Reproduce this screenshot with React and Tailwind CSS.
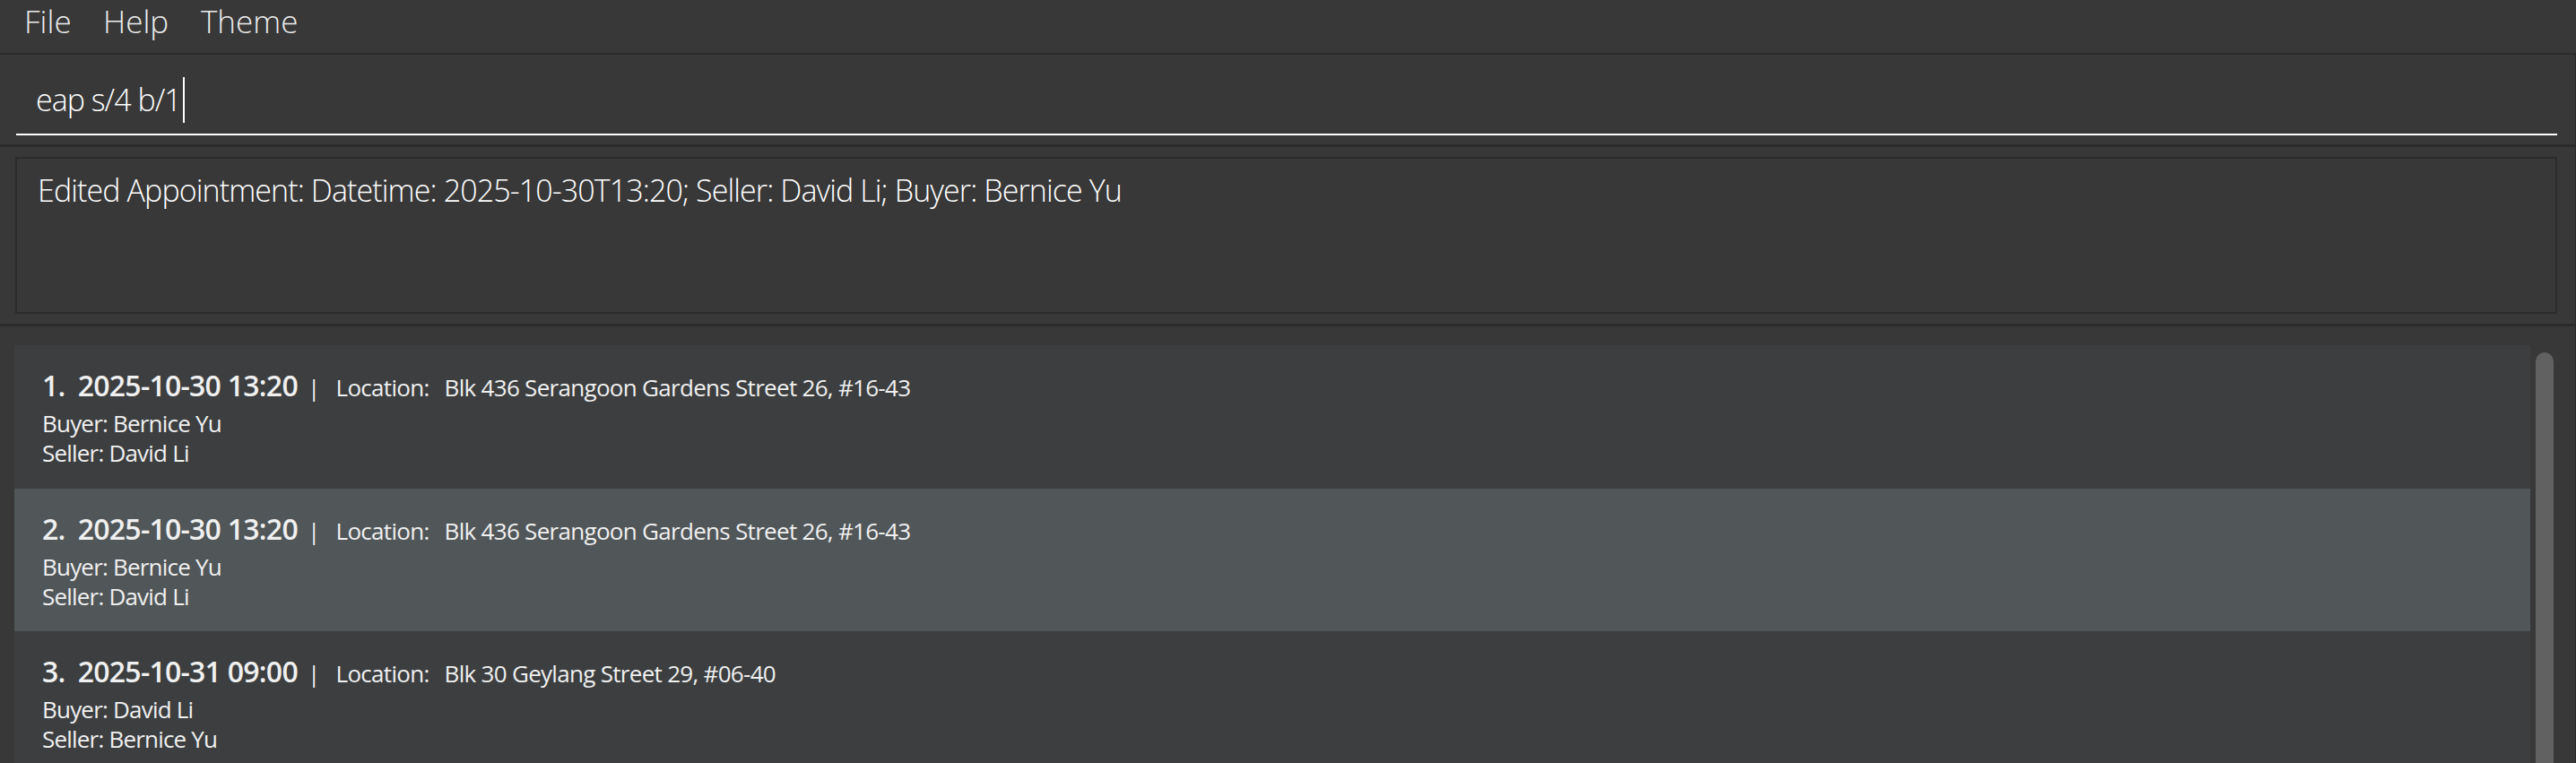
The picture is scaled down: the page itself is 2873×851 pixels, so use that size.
export default function App() {
  const appts = [
    { n: 1, dt: '2025-10-30 13:20', loc: 'Blk 436 Serangoon Gardens Street 26, #16-43', buyer: 'Bernice Yu', seller: 'David Li' },
    { n: 2, dt: '2025-10-30 13:20', loc: 'Blk 436 Serangoon Gardens Street 26, #16-43', buyer: 'Bernice Yu', seller: 'David Li' },
    { n: 3, dt: '2025-10-31 09:00', loc: 'Blk 30 Geylang Street 29, #06-40', buyer: 'David Li', seller: 'Bernice Yu' },
  ];
  return (
    <div className="w-[2873px] h-[851px] overflow-hidden bg-[#383838] flex flex-col font-['Open_Sans',sans-serif] text-white">
      {/* Menu bar */}
      <div className="h-[59px] shrink-0 flex pl-[27px] pt-[4px] text-[35px] leading-[40px] font-light text-[#ececec]">
        <span className="w-[88px]">File</span>
        <span className="w-[109px]">Help</span>
        <span>Theme</span>
      </div>
      <div className="h-[2px] shrink-0 bg-[#2b2b2b]" />

      {/* Command box */}
      <div className="h-[100px] shrink-0 pl-[18px] pr-[20px] border-r border-[#2b2b2b]">
        <div className="h-[90px] border-b-2 border-white pt-[27px] pl-[22px] flex items-start text-[34px] leading-[46px] font-light tracking-[-1px]">
          <span>eap s/4 b/1</span>
          <span className="inline-block w-[2px] h-[51px] bg-white -mt-[2px] ml-[2px]" />
        </div>
      </div>
      <div className="h-[3px] shrink-0 bg-[#2b2b2b]" />

      {/* Result display */}
      <div className="h-[197px] shrink-0 pt-[11px] pb-[11px] pl-[17px] pr-[20px] border-r border-[#2b2b2b]">
        <div className="h-full border-2 border-[#2b2b2b] pl-[23px] pt-[12px] text-[34px] leading-[46px] font-light tracking-[-0.9px]">
          Edited Appointment: Datetime: 2025-10-30T13:20; Seller: David Li; Buyer: Bernice Yu
        </div>
      </div>
      <div className="h-[3px] shrink-0 bg-[#2b2b2b]" />

      {/* List */}
      <div className="flex-1 min-h-0 flex pt-[21px] pl-[16px] border-r border-[#2b2b2b]">
        <div className="flex-1 flex flex-col">
          {appts.map((a, i) => (
            <div
              key={a.n}
              className={
                'shrink-0 pl-[31px] pt-[25px] text-[#f0f0f0] ' +
                (i % 2 === 1 ? 'bg-[#515658] h-[159px]' : 'bg-[#3c3e3f] h-[160px]')
              }
            >
              <div className="h-[40px] text-[26px] leading-[40px] whitespace-nowrap tracking-[-0.7px]">
                <span className="text-[32px] font-semibold">{a.n}.</span>
                <span className="text-[32px] font-semibold ml-[14px] tracking-[-0.75px]">{a.dt}</span>
                <span className="ml-[11px]">|</span>
                <span className="ml-[18px]">Location:</span>
                <span className="ml-[17px]">{a.loc}</span>
              </div>
              <div className="mt-[6px] text-[26px] leading-[33px] tracking-[-0.8px]">Buyer: {a.buyer}</div>
              <div className="text-[26px] leading-[33px] tracking-[-0.8px]">Seller: {a.seller}</div>
            </div>
          ))}
        </div>
        <div className="w-[50px] shrink-0 pl-[6px] pt-[8px]">
          <div className="w-[20px] h-[600px] rounded-[10px] bg-[#616161]" />
        </div>
      </div>
    </div>
  );
}
